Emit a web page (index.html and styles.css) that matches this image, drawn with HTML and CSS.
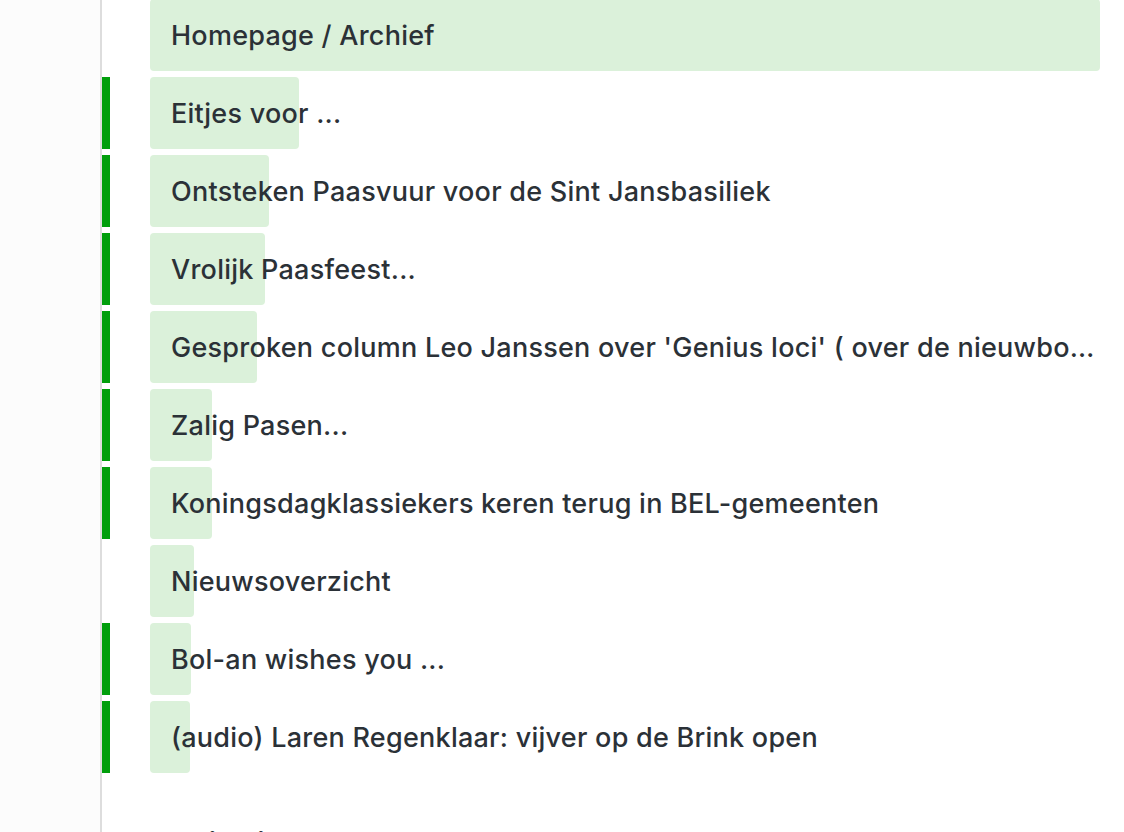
FILE: index.html
```html
<!DOCTYPE html>
<html lang="nl">
<head>
<meta charset="utf-8">
<title>Archief</title>
<link rel="stylesheet" href="styles.css">
</head>
<body>
<div class="page">
  <aside class="sidebar"></aside>
  <main class="content">
    <ul class="list">
      <li class="row"><span class="bar off"></span><div class="item"><span class="fill" style="width:950px"></span><span class="label">Homepage / Archief</span></div></li>
      <li class="row"><span class="bar"></span><div class="item"><span class="fill" style="width:149px"></span><span class="label">Eitjes voor ...</span></div></li>
      <li class="row"><span class="bar"></span><div class="item"><span class="fill" style="width:119px"></span><span class="label">Ontsteken Paasvuur voor de Sint Jansbasiliek</span></div></li>
      <li class="row"><span class="bar"></span><div class="item"><span class="fill" style="width:115px"></span><span class="label">Vrolijk Paasfeest...</span></div></li>
      <li class="row"><span class="bar"></span><div class="item"><span class="fill" style="width:107px"></span><span class="label">Gesproken column Leo Janssen over 'Genius loci' ( over de nieuwbouw van het Sint Jansbasiliek plein )</span></div></li>
      <li class="row"><span class="bar"></span><div class="item"><span class="fill" style="width:62px"></span><span class="label">Zalig Pasen...</span></div></li>
      <li class="row"><span class="bar"></span><div class="item"><span class="fill" style="width:62px"></span><span class="label">Koningsdagklassiekers keren terug in BEL-gemeenten</span></div></li>
      <li class="row"><span class="bar off"></span><div class="item"><span class="fill" style="width:44px"></span><span class="label">Nieuwsoverzicht</span></div></li>
      <li class="row"><span class="bar"></span><div class="item"><span class="fill" style="width:41px"></span><span class="label">Bol-an wishes you ...</span></div></li>
      <li class="row"><span class="bar"></span><div class="item"><span class="fill" style="width:40px"></span><span class="label">(audio) Laren Regenklaar: vijver op de Brink open</span></div></li>
    </ul>
    <h2 class="section-title">Publikaties</h2>
  </main>
</div>
</body>
</html>
```

FILE: styles.css
```css
html, body {
  margin: 0;
  padding: 0;
  background: #ffffff;
  overflow: hidden;
}
body {
  font-family: "Inter", "Noto Sans", sans-serif;
  color: #2b3137;
}
.page {
  display: flex;
  min-height: 832px;
}
.sidebar {
  width: 100px;
  flex: 0 0 100px;
  background: #fcfcfc;
  border-right: 2px solid #dddddd;
}
.content {
  flex: 1;
  min-width: 0;
  padding-right: 24px;
  margin-top: -1px;
}
.list {
  list-style: none;
  margin: 0;
  padding: 0;
  display: flex;
  flex-direction: column;
  gap: 6px;
}
.row {
  display: flex;
  height: 72px;
  gap: 40px;
}
.bar {
  width: 8px;
  flex: 0 0 8px;
  background: #009e0b;
}
.bar.off {
  background: transparent;
}
.item {
  position: relative;
  flex: 1;
  min-width: 0;
  display: flex;
  align-items: center;
}
.fill {
  position: absolute;
  left: 0;
  top: 0;
  bottom: 0;
  background: #dbf1da;
  border-radius: 4px;
}
.label {
  position: relative;
  min-width: 0;
  padding: 0 2px 0 21px;
  font-size: 27px;
  font-weight: 500;
  letter-spacing: 0.25px;
  white-space: nowrap;
  overflow: hidden;
  text-overflow: ellipsis;
}
.section-title {
  margin: 53px 0 0 48px;
  font-size: 27px;
  font-weight: 700;
}
```
